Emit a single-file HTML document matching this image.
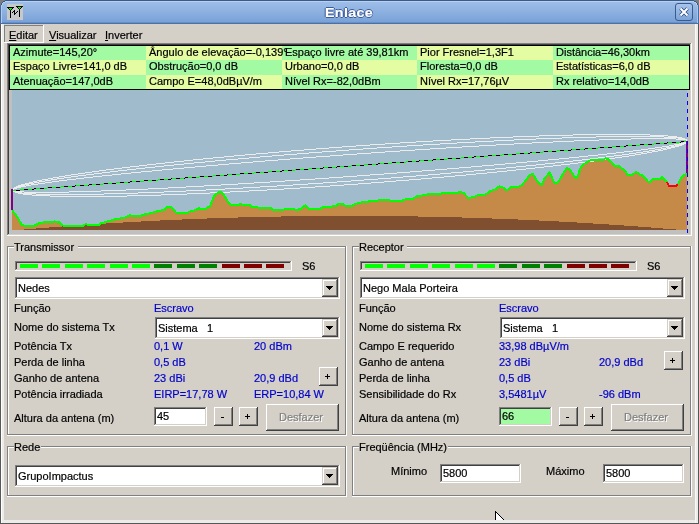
<!DOCTYPE html><html><head><meta charset="utf-8"><style>
html,body{margin:0;padding:0}body{width:699px;height:524px;position:relative;overflow:hidden;background:#7c7c7c}
body div,body svg{position:absolute}
.t{will-change:transform;-webkit-text-stroke:0.2px currentColor;font-family:"Liberation Sans", sans-serif;font-size:11px;line-height:13px;white-space:pre}
</style></head><body>
<div style="left:0px;top:24px;width:699px;height:500px;background:#5a5856;"></div>
<div style="left:1px;top:24px;width:697px;height:499px;background:#ececea;"></div>
<div style="left:1px;top:24px;width:1px;height:499px;background:#ffffff;"></div>
<div style="left:695px;top:24px;width:1px;height:499px;background:#f8f8f8;"></div>
<div style="left:4px;top:24px;width:691px;height:496px;background:#d4d0c8;"></div>
<div style="left:0;top:0;width:699px;height:24px;background:linear-gradient(#3c5a88 0,#3c5a88 1px,#b6d0f2 1px,#b6d0f2 2px,#9ebee8 2px,#8cb0e0 12px,#7aa2d8 22px,#6890c8 22px,#6890c8 23px,#4a70a8 23px,#4a70a8 24px)"></div>
<div style="left:0px;top:5px;width:1px;height:19px;background:#4a6a9a;"></div>
<div style="left:1px;top:5px;width:1px;height:18px;background:#b0ccf0;"></div>
<div style="left:697px;top:5px;width:1px;height:18px;background:#a8c4ea;"></div>
<div style="left:698px;top:5px;width:1px;height:19px;background:#4a6a9a;"></div>
<div style="left:0px;top:0px;width:5px;height:1px;background:#7c7c7c;"></div>
<div style="left:694px;top:0px;width:5px;height:1px;background:#7c7c7c;"></div>
<div style="left:0px;top:1px;width:3px;height:1px;background:#7c7c7c;"></div>
<div style="left:696px;top:1px;width:3px;height:1px;background:#7c7c7c;"></div>
<div style="left:3px;top:1px;width:2px;height:1px;background:#3c5a88;"></div>
<div style="left:694px;top:1px;width:2px;height:1px;background:#3c5a88;"></div>
<div style="left:0px;top:2px;width:2px;height:1px;background:#7c7c7c;"></div>
<div style="left:697px;top:2px;width:2px;height:1px;background:#7c7c7c;"></div>
<div style="left:2px;top:2px;width:1px;height:1px;background:#3c5a88;"></div>
<div style="left:696px;top:2px;width:1px;height:1px;background:#3c5a88;"></div>
<div style="left:3px;top:2px;width:2px;height:1px;background:#b6d0f2;"></div>
<div style="left:694px;top:2px;width:2px;height:1px;background:#b6d0f2;"></div>
<div style="left:0px;top:3px;width:1px;height:1px;background:#7c7c7c;"></div>
<div style="left:698px;top:3px;width:1px;height:1px;background:#7c7c7c;"></div>
<div style="left:1px;top:3px;width:1px;height:1px;background:#3c5a88;"></div>
<div style="left:697px;top:3px;width:1px;height:1px;background:#3c5a88;"></div>
<div style="left:2px;top:3px;width:1px;height:1px;background:#b6d0f2;"></div>
<div style="left:696px;top:3px;width:1px;height:1px;background:#b6d0f2;"></div>
<div style="left:0px;top:4px;width:1px;height:1px;background:#7c7c7c;"></div>
<div style="left:698px;top:4px;width:1px;height:1px;background:#7c7c7c;"></div>
<div style="left:1px;top:4px;width:1px;height:1px;background:#3c5a88;"></div>
<div style="left:697px;top:4px;width:1px;height:1px;background:#3c5a88;"></div>
<div style="left:2px;top:4px;width:1px;height:1px;background:#b6d0f2;"></div>
<div style="left:696px;top:4px;width:1px;height:1px;background:#b6d0f2;"></div>
<div class="t" style="left:325px;top:5px;font-size:12.5px;line-height:16px;font-weight:bold;letter-spacing:0.3px;transform:scaleX(1.14);transform-origin:0 0;color:#fff;text-shadow:1px 0 0 #3a5a98,-1px 0 0 #3a5a98,0 1px 0 #3a5a98,0 -1px 0 #3a5a98">Enlace</div>
<div style="left:675px;top:3px;width:18px;height:18px;box-sizing:border-box;border:1px solid #3a5a8a;border-radius:3px;background:linear-gradient(#a8c4ec,#7ca4d8)"></div>
<svg style="left:678px;top:6px" width="12" height="12"><path d="M2.5 2.5L9.5 9.5M9.5 2.5L2.5 9.5" stroke="#2c4c80" stroke-width="3.6"/><path d="M2.5 2.5L9.5 9.5M9.5 2.5L2.5 9.5" stroke="#fff" stroke-width="2"/></svg>
<svg style="left:7px;top:4px" width="16" height="16" shape-rendering="crispEdges"><rect width="16" height="16" fill="#c8c8c8"/><rect x="0" y="3" width="7" height="1" fill="#000"/><rect x="1" y="4" width="1" height="1" fill="#000"/><rect x="2" y="4" width="3" height="1" fill="#00ff00"/><rect x="5" y="4" width="1" height="1" fill="#000"/><rect x="2" y="5" width="1" height="1" fill="#000"/><rect x="3" y="5" width="1" height="1" fill="#00ff00"/><rect x="4" y="5" width="1" height="1" fill="#000"/><rect x="3" y="6" width="1" height="8" fill="#000"/><rect x="9" y="2" width="7" height="1" fill="#000"/><rect x="10" y="3" width="1" height="1" fill="#000"/><rect x="11" y="3" width="3" height="1" fill="#00ff00"/><rect x="14" y="3" width="1" height="1" fill="#000"/><rect x="11" y="4" width="1" height="1" fill="#000"/><rect x="12" y="4" width="1" height="1" fill="#00ff00"/><rect x="13" y="4" width="1" height="1" fill="#000"/><rect x="12" y="5" width="1" height="8" fill="#000"/><rect x="5" y="8" width="1" height="1" fill="#000"/><rect x="6" y="7" width="1" height="1" fill="#000"/><rect x="7" y="6" width="1" height="1" fill="#000"/><rect x="7" y="7" width="1" height="4" fill="#000"/><rect x="8" y="9" width="1" height="1" fill="#000"/><rect x="9" y="8" width="1" height="1" fill="#000"/><rect x="10" y="7" width="1" height="1" fill="#000"/></svg>
<div style="left:4px;top:25px;width:39px;height:1px;background:#808080;"></div>
<div style="left:4px;top:25px;width:1px;height:17px;background:#808080;"></div>
<div style="left:43px;top:25px;width:1px;height:18px;background:#ffffff;"></div>
<div style="left:4px;top:42px;width:40px;height:1px;background:#ffffff;"></div>
<div class="t" style="left:9px;top:29px;color:#000;"><u>E</u>ditar</div>
<div class="t" style="left:49px;top:29px;color:#000;"><u>V</u>isualizar</div>
<div class="t" style="left:105px;top:29px;color:#000;"><u>I</u>nverter</div>
<div style="left:9px;top:45px;width:681px;height:189px;background:#c0c0c0;"></div>
<div style="left:7px;top:43px;width:684px;height:1px;background:#808080;"></div>
<div style="left:7px;top:43px;width:1px;height:192px;background:#808080;"></div>
<div style="left:691px;top:43px;width:1px;height:193px;background:#ffffff;"></div>
<div style="left:7px;top:235px;width:685px;height:1px;background:#ffffff;"></div>
<div style="left:8px;top:44px;width:682px;height:1px;background:#404040;"></div>
<div style="left:8px;top:44px;width:1px;height:190px;background:#404040;"></div>
<div style="left:690px;top:44px;width:1px;height:191px;background:#d4d0c8;"></div>
<div style="left:8px;top:234px;width:683px;height:1px;background:#d4d0c8;"></div>
<div style="left:9px;top:45px;width:681px;height:45px;background:#000;"></div>
<div style="left:10px;top:46px;width:136px;height:14px;background:#a2faa2;"></div>
<div style="left:146px;top:46px;width:136px;height:14px;background:#e4fca2;"></div>
<div style="left:282px;top:46px;width:135px;height:14px;background:#a2faa2;"></div>
<div style="left:417px;top:46px;width:136px;height:14px;background:#e4fca2;"></div>
<div style="left:553px;top:46px;width:136px;height:14px;background:#a2faa2;"></div>
<div style="left:10px;top:60px;width:136px;height:15px;background:#e4fca2;"></div>
<div style="left:146px;top:60px;width:136px;height:15px;background:#a2faa2;"></div>
<div style="left:282px;top:60px;width:135px;height:15px;background:#e4fca2;"></div>
<div style="left:417px;top:60px;width:136px;height:15px;background:#a2faa2;"></div>
<div style="left:553px;top:60px;width:136px;height:15px;background:#e4fca2;"></div>
<div style="left:10px;top:75px;width:136px;height:14px;background:#a2faa2;"></div>
<div style="left:146px;top:75px;width:136px;height:14px;background:#e4fca2;"></div>
<div style="left:282px;top:75px;width:135px;height:14px;background:#a2faa2;"></div>
<div style="left:417px;top:75px;width:136px;height:14px;background:#e4fca2;"></div>
<div style="left:553px;top:75px;width:136px;height:14px;background:#a2faa2;"></div>
<div class="t" style="left:13px;top:46px;color:#000;">Azimute=145,20°</div>
<div class="t" style="left:149px;top:46px;color:#000;">Ângulo de elevação=-0,139°</div>
<div class="t" style="left:285px;top:46px;color:#000;">Espaço livre até 39,81km</div>
<div class="t" style="left:420px;top:46px;color:#000;">Pior Fresnel=1,3F1</div>
<div class="t" style="left:556px;top:46px;color:#000;">Distância=46,30km</div>
<div class="t" style="left:13px;top:60px;color:#000;">Espaço Livre=141,0 dB</div>
<div class="t" style="left:149px;top:60px;color:#000;">Obstrução=0,0 dB</div>
<div class="t" style="left:285px;top:60px;color:#000;">Urbano=0,0 dB</div>
<div class="t" style="left:420px;top:60px;color:#000;">Floresta=0,0 dB</div>
<div class="t" style="left:556px;top:60px;color:#000;">Estatísticas=6,0 dB</div>
<div class="t" style="left:13px;top:75px;color:#000;">Atenuação=147,0dB</div>
<div class="t" style="left:149px;top:75px;color:#000;">Campo E=48,0dBµV/m</div>
<div class="t" style="left:285px;top:75px;color:#000;">Nível Rx=-82,0dBm</div>
<div class="t" style="left:420px;top:75px;color:#000;">Nível Rx=17,76µV</div>
<div class="t" style="left:556px;top:75px;color:#000;">Rx relativo=14,0dB</div>
<svg style="left:12px;top:90px" width="675" height="140" shape-rendering="crispEdges">
<rect width="675" height="140" fill="#a0bccc"/>
<polygon points="0,140 0,120 0.5,120.5 4.2,125.5 7.1,130.1 9.9,135.0 14.5,136.2 19.7,136.2 22.5,135.5 27.1,133.3 31.7,132.4 40.8,132.4 42.5,131.2 44.3,132.4 47.7,132.4 50.5,135.5 71.7,135.5 73.5,134.1 76.9,135.2 86.1,135.5 88.4,133.5 96.4,131.2 103.3,129.3 112.4,127.8 118.1,125.2 120.4,126.1 127.3,126.3 133.0,124.4 139.9,122.9 146.7,120.9 151.9,120.0 155.9,116.6 159.4,117.4 164.5,123.1 174.2,123.5 178.3,121.4 184.0,120.0 186.8,118.2 189.1,119.1 193.1,118.9 197.1,116.8 198.8,114.5 202.3,105.4 208.0,101.4 212.0,105.4 216.0,111.7 219.4,115.1 226.3,115.1 228.5,114.0 230.8,114.8 237.7,115.1 239.9,117.1 245.7,117.4 247.4,118.2 258.8,118.2 261.7,120.2 271.4,120.2 272.5,119.0 282.8,119.4 284.6,120.5 286.9,119.4 289.1,118.8 293.1,115.4 297.1,119.4 307.5,119.0 311.4,117.2 318.8,116.7 324.5,115.5 325.7,114.4 331.4,114.4 332.5,115.5 340.5,115.5 342.3,114.4 346.3,113.2 349.1,112.4 355.4,112.4 357.7,110.9 374.9,110.1 380.6,110.9 388.5,111.3 393.1,109.4 401.1,109.0 404.5,106.5 413.7,104.8 417.7,103.7 428.5,104.2 431.4,102.5 434.3,102.5 436.5,103.3 445.1,103.3 448.0,101.7 452.0,103.3 456.6,108.2 459.4,107.4 462.9,106.5 465.2,105.4 468.5,105.1 474.2,104.3 478.2,100.8 482.2,100.0 487.4,96.2 491.4,97.7 494.8,100.5 499.4,97.0 505.1,97.4 509.7,95.1 514.8,89.4 517.1,85.4 520.6,83.7 525.7,91.7 529.7,95.1 532.6,88.2 537.7,82.5 542.3,92.8 545.2,93.1 546.9,91.0 550.4,84.7 554.9,77.8 558.4,80.1 563.5,88.1 565.8,86.4 568.1,78.4 571.0,75.0 576.7,70.9 580.1,69.8 591.6,69.8 593.3,68.3 596.1,69.2 600.7,73.2 602.4,75.5 605.9,75.5 612.1,80.1 616.2,85.0 619.6,85.5 624.1,81.7 627.1,84.2 630.5,85.3 637.0,92.6 640.8,89.4 647.7,89.4 649.8,87.2 652.8,89.8 655.0,91.8 657.1,96.1 664.4,96.1 666.6,92.8 668.7,88.4 671.3,85.8 675.0,83.2 675,82.69999999999999 675,140" fill="#c68a48"/>
<path d="M0,140L0,140L1,140L1,140L2,140L2,140L3,140L3,140L4,140L4,140L5,140L5,140L6,140L6,140L7,140L7,140L8,140L8,140L9,140L9,140L10,140L10,140L11,140L11,140L12,140L12,139L13,139L13,139L14,139L14,139L15,139L15,139L16,139L16,139L17,139L17,139L18,139L18,139L19,139L19,139L20,139L20,139L21,139L21,139L22,139L22,139L23,139L23,139L24,139L24,138L25,138L25,138L26,138L26,138L27,138L27,138L28,138L28,138L29,138L29,138L30,138L30,138L31,138L31,138L32,138L32,138L33,138L33,138L34,138L34,138L35,138L35,138L36,138L36,138L37,138L37,137L38,137L38,137L39,137L39,137L40,137L40,137L41,137L41,137L42,137L42,137L43,137L43,137L44,137L44,137L45,137L45,137L46,137L46,137L47,137L47,137L48,137L48,137L49,137L49,137L50,137L50,136L51,136L51,136L52,136L52,136L53,136L53,136L54,136L54,136L55,136L55,136L56,136L56,136L57,136L57,136L58,136L58,136L59,136L59,136L60,136L60,136L61,136L61,136L62,136L62,136L63,136L63,136L64,136L64,135L65,135L65,135L66,135L66,135L67,135L67,135L68,135L68,135L69,135L69,135L70,135L70,135L71,135L71,135L72,135L72,135L73,135L73,135L74,135L74,135L75,135L75,135L76,135L76,135L77,135L77,135L78,135L78,135L79,135L79,134L80,134L80,134L81,134L81,134L82,134L82,134L83,134L83,134L84,134L84,134L85,134L85,134L86,134L86,134L87,134L87,134L88,134L88,134L89,134L89,134L90,134L90,134L91,134L91,134L92,134L92,134L93,134L93,134L94,134L94,133L95,133L95,133L96,133L96,133L97,133L97,133L98,133L98,133L99,133L99,133L100,133L100,133L101,133L101,133L102,133L102,133L103,133L103,133L104,133L104,133L105,133L105,133L106,133L106,133L107,133L107,133L108,133L108,133L109,133L109,133L110,133L110,133L111,133L111,132L112,132L112,132L113,132L113,132L114,132L114,132L115,132L115,132L116,132L116,132L117,132L117,132L118,132L118,132L119,132L119,132L120,132L120,132L121,132L121,132L122,132L122,132L123,132L123,132L124,132L124,132L125,132L125,132L126,132L126,132L127,132L127,132L128,132L128,132L129,132L129,131L130,131L130,131L131,131L131,131L132,131L132,131L133,131L133,131L134,131L134,131L135,131L135,131L136,131L136,131L137,131L137,131L138,131L138,131L139,131L139,131L140,131L140,131L141,131L141,131L142,131L142,131L143,131L143,131L144,131L144,131L145,131L145,131L146,131L146,131L147,131L147,131L148,131L148,130L149,130L149,130L150,130L150,130L151,130L151,130L152,130L152,130L153,130L153,130L154,130L154,130L155,130L155,130L156,130L156,130L157,130L157,130L158,130L158,130L159,130L159,130L160,130L160,130L161,130L161,130L162,130L162,130L163,130L163,130L164,130L164,130L165,130L165,130L166,130L166,130L167,130L167,130L168,130L168,130L169,130L169,130L170,130L170,129L171,129L171,129L172,129L172,129L173,129L173,129L174,129L174,129L175,129L175,129L176,129L176,129L177,129L177,129L178,129L178,129L179,129L179,129L180,129L180,129L181,129L181,129L182,129L182,129L183,129L183,129L184,129L184,129L185,129L185,129L186,129L186,129L187,129L187,129L188,129L188,129L189,129L189,129L190,129L190,129L191,129L191,129L192,129L192,129L193,129L193,129L194,129L194,129L195,129L195,128L196,128L196,128L197,128L197,128L198,128L198,128L199,128L199,128L200,128L200,128L201,128L201,128L202,128L202,128L203,128L203,128L204,128L204,128L205,128L205,128L206,128L206,128L207,128L207,128L208,128L208,128L209,128L209,128L210,128L210,128L211,128L211,128L212,128L212,128L213,128L213,128L214,128L214,128L215,128L215,128L216,128L216,128L217,128L217,128L218,128L218,128L219,128L219,128L220,128L220,128L221,128L221,128L222,128L222,128L223,128L223,128L224,128L224,128L225,128L225,128L226,128L226,127L227,127L227,127L228,127L228,127L229,127L229,127L230,127L230,127L231,127L231,127L232,127L232,127L233,127L233,127L234,127L234,127L235,127L235,127L236,127L236,127L237,127L237,127L238,127L238,127L239,127L239,127L240,127L240,127L241,127L241,127L242,127L242,127L243,127L243,127L244,127L244,127L245,127L245,127L246,127L246,127L247,127L247,127L248,127L248,127L249,127L249,127L250,127L250,127L251,127L251,127L252,127L252,127L253,127L253,127L254,127L254,127L255,127L255,127L256,127L256,127L257,127L257,127L258,127L258,127L259,127L259,127L260,127L260,127L261,127L261,127L262,127L262,127L263,127L263,127L264,127L264,127L265,127L265,127L266,127L266,127L267,127L267,127L268,127L268,127L269,127L269,126L270,126L270,126L271,126L271,126L272,126L272,126L273,126L273,126L274,126L274,126L275,126L275,126L276,126L276,126L277,126L277,126L278,126L278,126L279,126L279,126L280,126L280,126L281,126L281,126L282,126L282,126L283,126L283,126L284,126L284,126L285,126L285,126L286,126L286,126L287,126L287,126L288,126L288,126L289,126L289,126L290,126L290,126L291,126L291,126L292,126L292,126L293,126L293,126L294,126L294,126L295,126L295,126L296,126L296,126L297,126L297,126L298,126L298,126L299,126L299,126L300,126L300,126L301,126L301,126L302,126L302,126L303,126L303,126L304,126L304,126L305,126L305,126L306,126L306,126L307,126L307,126L308,126L308,126L309,126L309,126L310,126L310,126L311,126L311,126L312,126L312,126L313,126L313,126L314,126L314,126L315,126L315,126L316,126L316,126L317,126L317,126L318,126L318,126L319,126L319,126L320,126L320,126L321,126L321,126L322,126L322,126L323,126L323,126L324,126L324,126L325,126L325,126L326,126L326,126L327,126L327,126L328,126L328,126L329,126L329,126L330,126L330,126L331,126L331,126L332,126L332,126L333,126L333,126L334,126L334,126L335,126L335,126L336,126L336,126L337,126L337,126L338,126L338,126L339,126L339,126L340,126L340,126L341,126L341,126L342,126L342,126L343,126L343,126L344,126L344,126L345,126L345,126L346,126L346,126L347,126L347,126L348,126L348,126L349,126L349,126L350,126L350,126L351,126L351,126L352,126L352,126L353,126L353,126L354,126L354,126L355,126L355,126L356,126L356,126L357,126L357,126L358,126L358,126L359,126L359,126L360,126L360,126L361,126L361,126L362,126L362,126L363,126L363,126L364,126L364,126L365,126L365,126L366,126L366,126L367,126L367,126L368,126L368,126L369,126L369,126L370,126L370,126L371,126L371,126L372,126L372,126L373,126L373,126L374,126L374,126L375,126L375,126L376,126L376,126L377,126L377,126L378,126L378,126L379,126L379,126L380,126L380,126L381,126L381,126L382,126L382,126L383,126L383,126L384,126L384,126L385,126L385,126L386,126L386,126L387,126L387,126L388,126L388,126L389,126L389,126L390,126L390,126L391,126L391,126L392,126L392,126L393,126L393,126L394,126L394,126L395,126L395,126L396,126L396,126L397,126L397,126L398,126L398,126L399,126L399,126L400,126L400,126L401,126L401,126L402,126L402,126L403,126L403,126L404,126L404,126L405,126L405,126L406,126L406,127L407,127L407,127L408,127L408,127L409,127L409,127L410,127L410,127L411,127L411,127L412,127L412,127L413,127L413,127L414,127L414,127L415,127L415,127L416,127L416,127L417,127L417,127L418,127L418,127L419,127L419,127L420,127L420,127L421,127L421,127L422,127L422,127L423,127L423,127L424,127L424,127L425,127L425,127L426,127L426,127L427,127L427,127L428,127L428,127L429,127L429,127L430,127L430,127L431,127L431,127L432,127L432,127L433,127L433,127L434,127L434,127L435,127L435,127L436,127L436,127L437,127L437,127L438,127L438,127L439,127L439,127L440,127L440,127L441,127L441,127L442,127L442,127L443,127L443,127L444,127L444,127L445,127L445,127L446,127L446,127L447,127L447,127L448,127L448,127L449,127L449,127L450,127L450,128L451,128L451,128L452,128L452,128L453,128L453,128L454,128L454,128L455,128L455,128L456,128L456,128L457,128L457,128L458,128L458,128L459,128L459,128L460,128L460,128L461,128L461,128L462,128L462,128L463,128L463,128L464,128L464,128L465,128L465,128L466,128L466,128L467,128L467,128L468,128L468,128L469,128L469,128L470,128L470,128L471,128L471,128L472,128L472,128L473,128L473,128L474,128L474,128L475,128L475,128L476,128L476,128L477,128L477,128L478,128L478,128L479,128L479,128L480,128L480,129L481,129L481,129L482,129L482,129L483,129L483,129L484,129L484,129L485,129L485,129L486,129L486,129L487,129L487,129L488,129L488,129L489,129L489,129L490,129L490,129L491,129L491,129L492,129L492,129L493,129L493,129L494,129L494,129L495,129L495,129L496,129L496,129L497,129L497,129L498,129L498,129L499,129L499,129L500,129L500,129L501,129L501,129L502,129L502,129L503,129L503,129L504,129L504,129L505,129L505,129L506,129L506,130L507,130L507,130L508,130L508,130L509,130L509,130L510,130L510,130L511,130L511,130L512,130L512,130L513,130L513,130L514,130L514,130L515,130L515,130L516,130L516,130L517,130L517,130L518,130L518,130L519,130L519,130L520,130L520,130L521,130L521,130L522,130L522,130L523,130L523,130L524,130L524,130L525,130L525,130L526,130L526,130L527,130L527,131L528,131L528,131L529,131L529,131L530,131L530,131L531,131L531,131L532,131L532,131L533,131L533,131L534,131L534,131L535,131L535,131L536,131L536,131L537,131L537,131L538,131L538,131L539,131L539,131L540,131L540,131L541,131L541,131L542,131L542,131L543,131L543,131L544,131L544,131L545,131L545,131L546,131L546,131L547,131L547,132L548,132L548,132L549,132L549,132L550,132L550,132L551,132L551,132L552,132L552,132L553,132L553,132L554,132L554,132L555,132L555,132L556,132L556,132L557,132L557,132L558,132L558,132L559,132L559,132L560,132L560,132L561,132L561,132L562,132L562,132L563,132L563,132L564,132L564,132L565,132L565,133L566,133L566,133L567,133L567,133L568,133L568,133L569,133L569,133L570,133L570,133L571,133L571,133L572,133L572,133L573,133L573,133L574,133L574,133L575,133L575,133L576,133L576,133L577,133L577,133L578,133L578,133L579,133L579,133L580,133L580,133L581,133L581,134L582,134L582,134L583,134L583,134L584,134L584,134L585,134L585,134L586,134L586,134L587,134L587,134L588,134L588,134L589,134L589,134L590,134L590,134L591,134L591,134L592,134L592,134L593,134L593,134L594,134L594,134L595,134L595,134L596,134L596,134L597,134L597,135L598,135L598,135L599,135L599,135L600,135L600,135L601,135L601,135L602,135L602,135L603,135L603,135L604,135L604,135L605,135L605,135L606,135L606,135L607,135L607,135L608,135L608,135L609,135L609,135L610,135L610,135L611,135L611,135L612,135L612,136L613,136L613,136L614,136L614,136L615,136L615,136L616,136L616,136L617,136L617,136L618,136L618,136L619,136L619,136L620,136L620,136L621,136L621,136L622,136L622,136L623,136L623,136L624,136L624,136L625,136L625,136L626,136L626,137L627,137L627,137L628,137L628,137L629,137L629,137L630,137L630,137L631,137L631,137L632,137L632,137L633,137L633,137L634,137L634,137L635,137L635,137L636,137L636,137L637,137L637,137L638,137L638,137L639,137L639,138L640,138L640,138L641,138L641,138L642,138L642,138L643,138L643,138L644,138L644,138L645,138L645,138L646,138L646,138L647,138L647,138L648,138L648,138L649,138L649,138L650,138L650,138L651,138L651,139L652,139L652,139L653,139L653,139L654,139L654,139L655,139L655,139L656,139L656,139L657,139L657,139L658,139L658,139L659,139L659,139L660,139L660,139L661,139L661,139L662,139L662,139L663,139L663,139L664,139L664,140L665,140L665,140L666,140L666,140L667,140L667,140L668,140L668,140L669,140L669,140L670,140L670,140L671,140L671,140L672,140L672,140L673,140L673,140L674,140L674,140L675,140L675,140z" fill="#7f4f30"/>
<path d="M0,100h1v1h-1zM1,99h1v1h-1zM2,98h3v1h-3zM5,97h4v1h-4zM9,96h5v1h-5zM14,95h5v1h-5zM19,94h7v1h-7zM26,93h7v1h-7zM33,92h7v1h-7zM40,91h7v1h-7zM47,90h8v1h-8zM55,89h9v1h-9zM64,88h8v1h-8zM72,87h9v1h-9zM81,86h9v1h-9zM90,85h10v1h-10zM100,84h9v1h-9zM109,83h10v1h-10zM119,82h10v1h-10zM129,81h11v1h-11zM140,80h10v1h-10zM150,79h11v1h-11zM161,78h11v1h-11zM172,77h11v1h-11zM183,76h11v1h-11zM194,75h12v1h-12zM206,74h11v1h-11zM217,73h12v1h-12zM229,72h12v1h-12zM241,71h12v1h-12zM253,70h13v1h-13zM266,69h12v1h-12zM278,68h13v1h-13zM291,67h13v1h-13zM304,66h14v1h-14zM318,65h13v1h-13zM331,64h14v1h-14zM345,63h14v1h-14zM359,62h14v1h-14zM373,61h15v1h-15zM388,60h15v1h-15zM403,59h15v1h-15zM418,58h16v1h-16zM434,57h16v1h-16zM450,56h17v1h-17zM467,55h17v1h-17zM484,54h18v1h-18zM502,53h18v1h-18zM520,52h21v1h-21zM541,51h21v1h-21zM562,50h25v1h-25zM587,49h32v1h-32zM619,48h45v1h-45zM664,49h10v1h-10zM674,50h1v1h-1zM0,100h2v1h-2zM2,101h10v1h-10zM12,102h45v1h-45zM57,101h32v1h-32zM89,100h25v1h-25zM114,99h22v1h-22zM136,98h20v1h-20zM156,97h18v1h-18zM174,96h18v1h-18zM192,95h17v1h-17zM209,94h17v1h-17zM226,93h16v1h-16zM242,92h16v1h-16zM258,91h15v1h-15zM273,90h15v1h-15zM288,89h15v1h-15zM303,88h14v1h-14zM317,87h14v1h-14zM331,86h14v1h-14zM345,85h13v1h-13zM358,84h14v1h-14zM372,83h13v1h-13zM385,82h13v1h-13zM398,81h12v1h-12zM410,80h13v1h-13zM423,79h12v1h-12zM435,78h12v1h-12zM447,77h12v1h-12zM459,76h11v1h-11zM470,75h12v1h-12zM482,74h11v1h-11zM493,73h11v1h-11zM504,72h11v1h-11zM515,71h11v1h-11zM526,70h10v1h-10zM536,69h11v1h-11zM547,68h10v1h-10zM557,67h10v1h-10zM567,66h9v1h-9zM576,65h10v1h-10zM586,64h9v1h-9zM595,63h9v1h-9zM604,62h8v1h-8zM612,61h9v1h-9zM621,60h8v1h-8zM629,59h7v1h-7zM636,58h7v1h-7zM643,57h7v1h-7zM650,56h7v1h-7zM657,55h5v1h-5zM662,54h5v1h-5zM667,53h4v1h-4zM671,52h3v1h-3zM674,51h1v1h-1zM0,100h1v1h-1zM1,98h1v2h-1zM2,98h1v1h-1zM3,97h2v1h-2zM5,96h4v1h-4zM9,95h4v1h-4zM13,94h4v1h-4zM17,93h5v1h-5zM22,92h5v1h-5zM27,91h6v1h-6zM33,90h6v1h-6zM39,89h6v1h-6zM45,88h7v1h-7zM52,87h7v1h-7zM59,86h7v1h-7zM66,85h8v1h-8zM74,84h8v1h-8zM82,83h8v1h-8zM90,82h8v1h-8zM98,81h8v1h-8zM106,80h9v1h-9zM115,79h9v1h-9zM124,78h9v1h-9zM133,77h10v1h-10zM143,76h9v1h-9zM152,75h10v1h-10zM162,74h10v1h-10zM172,73h10v1h-10zM182,72h11v1h-11zM193,71h10v1h-10zM203,70h11v1h-11zM214,69h12v1h-12zM226,68h11v1h-11zM237,67h11v1h-11zM248,66h12v1h-12zM260,65h12v1h-12zM272,64h13v1h-13zM285,63h12v1h-12zM297,62h13v1h-13zM310,61h14v1h-14zM324,60h13v1h-13zM337,59h14v1h-14zM351,58h14v1h-14zM365,57h15v1h-15zM380,56h15v1h-15zM395,55h16v1h-16zM411,54h17v1h-17zM428,53h17v1h-17zM445,52h18v1h-18zM463,51h19v1h-19zM482,50h20v1h-20zM502,49h22v1h-22zM524,48h26v1h-26zM550,47h34v1h-34zM584,46h68v1h-68zM652,47h14v1h-14zM666,48h6v1h-6zM672,49h3v1h-3zM0,100h1v1h-1zM1,101h3v1h-3zM4,102h6v1h-6zM10,103h14v1h-14zM24,104h68v1h-68zM92,103h34v1h-34zM126,102h26v1h-26zM152,101h22v1h-22zM174,100h20v1h-20zM194,99h19v1h-19zM213,98h18v1h-18zM231,97h17v1h-17zM248,96h17v1h-17zM265,95h16v1h-16zM281,94h15v1h-15zM296,93h15v1h-15zM311,92h14v1h-14zM325,91h14v1h-14zM339,90h13v1h-13zM352,89h14v1h-14zM366,88h13v1h-13zM379,87h12v1h-12zM391,86h13v1h-13zM404,85h12v1h-12zM416,84h12v1h-12zM428,83h11v1h-11zM439,82h12v1h-12zM451,81h11v1h-11zM462,80h11v1h-11zM473,79h10v1h-10zM483,78h11v1h-11zM494,77h10v1h-10zM504,76h10v1h-10zM514,75h10v1h-10zM524,74h9v1h-9zM533,73h10v1h-10zM543,72h9v1h-9zM552,71h9v1h-9zM561,70h9v1h-9zM570,69h8v1h-8zM578,68h8v1h-8zM586,67h8v1h-8zM594,66h8v1h-8zM602,65h8v1h-8zM610,64h7v1h-7zM617,63h7v1h-7zM624,62h7v1h-7zM631,61h6v1h-6zM637,60h6v1h-6zM643,59h6v1h-6zM649,58h5v1h-5zM654,57h5v1h-5zM659,56h4v1h-4zM663,55h4v1h-4zM667,54h4v1h-4zM671,53h2v1h-2zM673,52h2v1h-2zM0,100h1v1h-1zM1,98h1v2h-1zM2,97h2v1h-2zM4,96h2v1h-2zM6,95h3v1h-3zM9,94h4v1h-4zM13,93h4v1h-4zM17,92h4v1h-4zM21,91h4v1h-4zM25,90h5v1h-5zM30,89h6v1h-6zM36,88h5v1h-5zM41,87h6v1h-6zM47,86h6v1h-6zM53,85h6v1h-6zM59,84h7v1h-7zM66,83h7v1h-7zM73,82h7v1h-7zM80,81h7v1h-7zM87,80h7v1h-7zM94,79h8v1h-8zM102,78h8v1h-8zM110,77h8v1h-8zM118,76h9v1h-9zM127,75h8v1h-8zM135,74h9v1h-9zM144,73h9v1h-9zM153,72h9v1h-9zM162,71h10v1h-10zM172,70h9v1h-9zM181,69h10v1h-10zM191,68h10v1h-10zM201,67h11v1h-11zM212,66h10v1h-10zM222,65h11v1h-11zM233,64h11v1h-11zM244,63h12v1h-12zM256,62h11v1h-11zM267,61h12v1h-12zM279,60h13v1h-13zM292,59h12v1h-12zM304,58h13v1h-13zM317,57h13v1h-13zM330,56h14v1h-14zM344,55h14v1h-14zM358,54h15v1h-15zM373,53h15v1h-15zM388,52h16v1h-16zM404,51h17v1h-17zM421,50h18v1h-18zM439,49h19v1h-19zM458,48h20v1h-20zM478,47h23v1h-23zM501,46h26v1h-26zM527,45h34v1h-34zM561,44h77v1h-77zM638,45h18v1h-18zM656,46h9v1h-9zM665,47h5v1h-5zM670,48h3v1h-3zM673,49h2v1h-2zM0,100h1v1h-1zM1,101h2v1h-2zM3,102h3v1h-3zM6,103h5v1h-5zM11,104h9v1h-9zM20,105h18v1h-18zM38,106h77v1h-77zM115,105h34v1h-34zM149,104h26v1h-26zM175,103h23v1h-23zM198,102h20v1h-20zM218,101h19v1h-19zM237,100h18v1h-18zM255,99h17v1h-17zM272,98h16v1h-16zM288,97h15v1h-15zM303,96h15v1h-15zM318,95h14v1h-14zM332,94h14v1h-14zM346,93h13v1h-13zM359,92h13v1h-13zM372,91h12v1h-12zM384,90h13v1h-13zM397,89h12v1h-12zM409,88h11v1h-11zM420,87h12v1h-12zM432,86h11v1h-11zM443,85h11v1h-11zM454,84h10v1h-10zM464,83h11v1h-11zM475,82h10v1h-10zM485,81h10v1h-10zM495,80h9v1h-9zM504,79h10v1h-10zM514,78h9v1h-9zM523,77h9v1h-9zM532,76h9v1h-9zM541,75h8v1h-8zM549,74h9v1h-9zM558,73h8v1h-8zM566,72h8v1h-8zM574,71h8v1h-8zM582,70h7v1h-7zM589,69h7v1h-7zM596,68h7v1h-7zM603,67h7v1h-7zM610,66h7v1h-7zM617,65h6v1h-6zM623,64h6v1h-6zM629,63h6v1h-6zM635,62h5v1h-5zM640,61h6v1h-6zM646,60h5v1h-5zM651,59h4v1h-4zM655,58h4v1h-4zM659,57h4v1h-4zM663,56h4v1h-4zM667,55h3v1h-3zM670,54h2v1h-2zM672,53h2v1h-2zM674,52h1v1h-1z" fill="#ececec"/>
<polyline points="0.5,120.5 4.2,125.5 7.1,130.1 9.9,135.0 14.5,136.2 19.7,136.2 22.5,135.5 27.1,133.3 31.7,132.4 40.8,132.4 42.5,131.2 44.3,132.4 47.7,132.4 50.5,135.5 71.7,135.5 73.5,134.1 76.9,135.2 86.1,135.5 88.4,133.5 96.4,131.2 103.3,129.3 112.4,127.8 118.1,125.2 120.4,126.1 127.3,126.3 133.0,124.4 139.9,122.9 146.7,120.9 151.9,120.0 155.9,116.6 159.4,117.4 164.5,123.1 174.2,123.5 178.3,121.4 184.0,120.0 186.8,118.2 189.1,119.1 193.1,118.9 197.1,116.8 198.8,114.5 202.3,105.4 208.0,101.4 212.0,105.4 216.0,111.7 219.4,115.1 226.3,115.1 228.5,114.0 230.8,114.8 237.7,115.1 239.9,117.1 245.7,117.4 247.4,118.2 258.8,118.2 261.7,120.2 271.4,120.2 272.5,119.0 282.8,119.4 284.6,120.5 286.9,119.4 289.1,118.8 293.1,115.4 297.1,119.4 307.5,119.0 311.4,117.2 318.8,116.7 324.5,115.5 325.7,114.4 331.4,114.4 332.5,115.5 340.5,115.5 342.3,114.4 346.3,113.2 349.1,112.4 355.4,112.4 357.7,110.9 374.9,110.1 380.6,110.9 388.5,111.3 393.1,109.4 401.1,109.0 404.5,106.5 413.7,104.8 417.7,103.7 428.5,104.2 431.4,102.5 434.3,102.5 436.5,103.3 445.1,103.3 448.0,101.7 452.0,103.3 456.6,108.2 459.4,107.4 462.9,106.5 465.2,105.4 468.5,105.1 474.2,104.3 478.2,100.8 482.2,100.0 487.4,96.2 491.4,97.7 494.8,100.5 499.4,97.0 505.1,97.4 509.7,95.1 514.8,89.4 517.1,85.4 520.6,83.7 525.7,91.7 529.7,95.1 532.6,88.2 537.7,82.5 542.3,92.8 545.2,93.1 546.9,91.0 550.4,84.7 554.9,77.8 558.4,80.1 563.5,88.1 565.8,86.4 568.1,78.4 571.0,75.0 576.7,70.9 580.1,69.8 591.6,69.8 593.3,68.3 596.1,69.2 600.7,73.2 602.4,75.5 605.9,75.5 612.1,80.1 616.2,85.0 619.6,85.5 624.1,81.7 627.1,84.2 630.5,85.3 637.0,92.6 640.8,89.4 647.7,89.4 649.8,87.2 652.8,89.8 655.0,91.8 657.1,96.1 664.4,96.1 666.6,92.8 668.7,88.4 671.3,85.8 675.0,83.2" fill="none" stroke="#00ff00" stroke-width="2" stroke-linejoin="round"/>
<polyline points="655.0,91.8 657.1,96.1 664.4,96.1 665.5,94.0" fill="none" stroke="#ff0000" stroke-width="2"/>
<path d="M0,100h1v1h-1zM1,100h1v1h-1zM2,100h1v1h-1zM3,100h1v1h-1zM8,99h1v1h-1zM9,99h1v1h-1zM10,99h1v1h-1zM11,99h1v1h-1zM16,99h1v1h-1zM17,99h1v1h-1zM18,99h1v1h-1zM19,99h1v1h-1zM24,98h1v1h-1zM25,98h1v1h-1zM26,98h1v1h-1zM27,98h1v1h-1zM32,98h1v1h-1zM33,98h1v1h-1zM34,98h1v1h-1zM35,97h1v1h-1zM40,97h1v1h-1zM41,97h1v1h-1zM42,97h1v1h-1zM43,97h1v1h-1zM48,97h1v1h-1zM49,96h1v1h-1zM50,96h1v1h-1zM51,96h1v1h-1zM56,96h1v1h-1zM57,96h1v1h-1zM58,96h1v1h-1zM59,96h1v1h-1zM64,95h1v1h-1zM65,95h1v1h-1zM66,95h1v1h-1zM67,95h1v1h-1zM72,95h1v1h-1zM73,95h1v1h-1zM74,95h1v1h-1zM75,95h1v1h-1zM80,94h1v1h-1zM81,94h1v1h-1zM82,94h1v1h-1zM83,94h1v1h-1zM88,94h1v1h-1zM89,94h1v1h-1zM90,94h1v1h-1zM91,93h1v1h-1zM96,93h1v1h-1zM97,93h1v1h-1zM98,93h1v1h-1zM99,93h1v1h-1zM104,92h1v1h-1zM105,92h1v1h-1zM106,92h1v1h-1zM107,92h1v1h-1zM112,92h1v1h-1zM113,92h1v1h-1zM114,92h1v1h-1zM115,92h1v1h-1zM120,91h1v1h-1zM121,91h1v1h-1zM122,91h1v1h-1zM123,91h1v1h-1zM128,91h1v1h-1zM129,91h1v1h-1zM130,91h1v1h-1zM131,91h1v1h-1zM136,90h1v1h-1zM137,90h1v1h-1zM138,90h1v1h-1zM139,90h1v1h-1zM144,90h1v1h-1zM145,90h1v1h-1zM146,89h1v1h-1zM147,89h1v1h-1zM152,89h1v1h-1zM153,89h1v1h-1zM154,89h1v1h-1zM155,89h1v1h-1zM160,88h1v1h-1zM161,88h1v1h-1zM162,88h1v1h-1zM163,88h1v1h-1zM168,88h1v1h-1zM169,88h1v1h-1zM170,88h1v1h-1zM171,88h1v1h-1zM176,87h1v1h-1zM177,87h1v1h-1zM178,87h1v1h-1zM179,87h1v1h-1zM184,87h1v1h-1zM185,87h1v1h-1zM186,87h1v1h-1zM187,86h1v1h-1zM192,86h1v1h-1zM193,86h1v1h-1zM194,86h1v1h-1zM195,86h1v1h-1zM200,86h1v1h-1zM201,85h1v1h-1zM202,85h1v1h-1zM203,85h1v1h-1zM208,85h1v1h-1zM209,85h1v1h-1zM210,85h1v1h-1zM211,85h1v1h-1zM216,84h1v1h-1zM217,84h1v1h-1zM218,84h1v1h-1zM219,84h1v1h-1zM224,84h1v1h-1zM225,84h1v1h-1zM226,84h1v1h-1zM227,84h1v1h-1zM232,83h1v1h-1zM233,83h1v1h-1zM234,83h1v1h-1zM235,83h1v1h-1zM240,83h1v1h-1zM241,83h1v1h-1zM242,82h1v1h-1zM243,82h1v1h-1zM248,82h1v1h-1zM249,82h1v1h-1zM250,82h1v1h-1zM251,82h1v1h-1zM256,81h1v1h-1zM257,81h1v1h-1zM258,81h1v1h-1zM259,81h1v1h-1zM264,81h1v1h-1zM265,81h1v1h-1zM266,81h1v1h-1zM267,81h1v1h-1zM272,80h1v1h-1zM273,80h1v1h-1zM274,80h1v1h-1zM275,80h1v1h-1zM280,80h1v1h-1zM281,80h1v1h-1zM282,80h1v1h-1zM283,79h1v1h-1zM288,79h1v1h-1zM289,79h1v1h-1zM290,79h1v1h-1zM291,79h1v1h-1zM296,79h1v1h-1zM297,78h1v1h-1zM298,78h1v1h-1zM299,78h1v1h-1zM304,78h1v1h-1zM305,78h1v1h-1zM306,78h1v1h-1zM307,78h1v1h-1zM312,77h1v1h-1zM313,77h1v1h-1zM314,77h1v1h-1zM315,77h1v1h-1zM320,77h1v1h-1zM321,77h1v1h-1zM322,77h1v1h-1zM323,77h1v1h-1zM328,76h1v1h-1zM329,76h1v1h-1zM330,76h1v1h-1zM331,76h1v1h-1zM336,76h1v1h-1zM337,76h1v1h-1zM338,76h1v1h-1zM339,75h1v1h-1zM344,75h1v1h-1zM345,75h1v1h-1zM346,75h1v1h-1zM347,75h1v1h-1zM352,74h1v1h-1zM353,74h1v1h-1zM354,74h1v1h-1zM355,74h1v1h-1zM360,74h1v1h-1zM361,74h1v1h-1zM362,74h1v1h-1zM363,74h1v1h-1zM368,73h1v1h-1zM369,73h1v1h-1zM370,73h1v1h-1zM371,73h1v1h-1zM376,73h1v1h-1zM377,73h1v1h-1zM378,73h1v1h-1zM379,73h1v1h-1zM384,72h1v1h-1zM385,72h1v1h-1zM386,72h1v1h-1zM387,72h1v1h-1zM392,72h1v1h-1zM393,72h1v1h-1zM394,71h1v1h-1zM395,71h1v1h-1zM400,71h1v1h-1zM401,71h1v1h-1zM402,71h1v1h-1zM403,71h1v1h-1zM408,70h1v1h-1zM409,70h1v1h-1zM410,70h1v1h-1zM411,70h1v1h-1zM416,70h1v1h-1zM417,70h1v1h-1zM418,70h1v1h-1zM419,70h1v1h-1zM424,69h1v1h-1zM425,69h1v1h-1zM426,69h1v1h-1zM427,69h1v1h-1zM432,69h1v1h-1zM433,69h1v1h-1zM434,69h1v1h-1zM435,68h1v1h-1zM440,68h1v1h-1zM441,68h1v1h-1zM442,68h1v1h-1zM443,68h1v1h-1zM448,68h1v1h-1zM449,67h1v1h-1zM450,67h1v1h-1zM451,67h1v1h-1zM456,67h1v1h-1zM457,67h1v1h-1zM458,67h1v1h-1zM459,67h1v1h-1zM464,66h1v1h-1zM465,66h1v1h-1zM466,66h1v1h-1zM467,66h1v1h-1zM472,66h1v1h-1zM473,66h1v1h-1zM474,66h1v1h-1zM475,66h1v1h-1zM480,65h1v1h-1zM481,65h1v1h-1zM482,65h1v1h-1zM483,65h1v1h-1zM488,65h1v1h-1zM489,65h1v1h-1zM490,64h1v1h-1zM491,64h1v1h-1zM496,64h1v1h-1zM497,64h1v1h-1zM498,64h1v1h-1zM499,64h1v1h-1zM504,63h1v1h-1zM505,63h1v1h-1zM506,63h1v1h-1zM507,63h1v1h-1zM512,63h1v1h-1zM513,63h1v1h-1zM514,63h1v1h-1zM515,63h1v1h-1zM520,62h1v1h-1zM521,62h1v1h-1zM522,62h1v1h-1zM523,62h1v1h-1zM528,62h1v1h-1zM529,62h1v1h-1zM530,62h1v1h-1zM531,61h1v1h-1zM536,61h1v1h-1zM537,61h1v1h-1zM538,61h1v1h-1zM539,61h1v1h-1zM544,61h1v1h-1zM545,60h1v1h-1zM546,60h1v1h-1zM547,60h1v1h-1zM552,60h1v1h-1zM553,60h1v1h-1zM554,60h1v1h-1zM555,60h1v1h-1zM560,59h1v1h-1zM561,59h1v1h-1zM562,59h1v1h-1zM563,59h1v1h-1zM568,59h1v1h-1zM569,59h1v1h-1zM570,59h1v1h-1zM571,59h1v1h-1zM576,58h1v1h-1zM577,58h1v1h-1zM578,58h1v1h-1zM579,58h1v1h-1zM584,58h1v1h-1zM585,58h1v1h-1zM586,57h1v1h-1zM587,57h1v1h-1zM592,57h1v1h-1zM593,57h1v1h-1zM594,57h1v1h-1zM595,57h1v1h-1zM600,56h1v1h-1zM601,56h1v1h-1zM602,56h1v1h-1zM603,56h1v1h-1zM608,56h1v1h-1zM609,56h1v1h-1zM610,56h1v1h-1zM611,56h1v1h-1zM616,55h1v1h-1zM617,55h1v1h-1zM618,55h1v1h-1zM619,55h1v1h-1zM624,55h1v1h-1zM625,55h1v1h-1zM626,55h1v1h-1zM627,55h1v1h-1zM632,54h1v1h-1zM633,54h1v1h-1zM634,54h1v1h-1zM635,54h1v1h-1zM640,54h1v1h-1zM641,54h1v1h-1zM642,53h1v1h-1zM643,53h1v1h-1zM648,53h1v1h-1zM649,53h1v1h-1zM650,53h1v1h-1zM651,53h1v1h-1zM656,52h1v1h-1zM657,52h1v1h-1zM658,52h1v1h-1zM659,52h1v1h-1zM664,52h1v1h-1zM665,52h1v1h-1zM666,52h1v1h-1zM667,52h1v1h-1zM672,51h1v1h-1zM673,51h1v1h-1zM674,51h1v1h-1z" fill="#00ff00"/><path d="M4,100h1v1h-1zM5,100h1v1h-1zM6,100h1v1h-1zM7,100h1v1h-1zM12,99h1v1h-1zM13,99h1v1h-1zM14,99h1v1h-1zM15,99h1v1h-1zM20,99h1v1h-1zM21,99h1v1h-1zM22,98h1v1h-1zM23,98h1v1h-1zM28,98h1v1h-1zM29,98h1v1h-1zM30,98h1v1h-1zM31,98h1v1h-1zM36,97h1v1h-1zM37,97h1v1h-1zM38,97h1v1h-1zM39,97h1v1h-1zM44,97h1v1h-1zM45,97h1v1h-1zM46,97h1v1h-1zM47,97h1v1h-1zM52,96h1v1h-1zM53,96h1v1h-1zM54,96h1v1h-1zM55,96h1v1h-1zM60,96h1v1h-1zM61,96h1v1h-1zM62,96h1v1h-1zM63,95h1v1h-1zM68,95h1v1h-1zM69,95h1v1h-1zM70,95h1v1h-1zM71,95h1v1h-1zM76,95h1v1h-1zM77,94h1v1h-1zM78,94h1v1h-1zM79,94h1v1h-1zM84,94h1v1h-1zM85,94h1v1h-1zM86,94h1v1h-1zM87,94h1v1h-1zM92,93h1v1h-1zM93,93h1v1h-1zM94,93h1v1h-1zM95,93h1v1h-1zM100,93h1v1h-1zM101,93h1v1h-1zM102,93h1v1h-1zM103,93h1v1h-1zM108,92h1v1h-1zM109,92h1v1h-1zM110,92h1v1h-1zM111,92h1v1h-1zM116,92h1v1h-1zM117,92h1v1h-1zM118,91h1v1h-1zM119,91h1v1h-1zM124,91h1v1h-1zM125,91h1v1h-1zM126,91h1v1h-1zM127,91h1v1h-1zM132,90h1v1h-1zM133,90h1v1h-1zM134,90h1v1h-1zM135,90h1v1h-1zM140,90h1v1h-1zM141,90h1v1h-1zM142,90h1v1h-1zM143,90h1v1h-1zM148,89h1v1h-1zM149,89h1v1h-1zM150,89h1v1h-1zM151,89h1v1h-1zM156,89h1v1h-1zM157,89h1v1h-1zM158,89h1v1h-1zM159,88h1v1h-1zM164,88h1v1h-1zM165,88h1v1h-1zM166,88h1v1h-1zM167,88h1v1h-1zM172,88h1v1h-1zM173,87h1v1h-1zM174,87h1v1h-1zM175,87h1v1h-1zM180,87h1v1h-1zM181,87h1v1h-1zM182,87h1v1h-1zM183,87h1v1h-1zM188,86h1v1h-1zM189,86h1v1h-1zM190,86h1v1h-1zM191,86h1v1h-1zM196,86h1v1h-1zM197,86h1v1h-1zM198,86h1v1h-1zM199,86h1v1h-1zM204,85h1v1h-1zM205,85h1v1h-1zM206,85h1v1h-1zM207,85h1v1h-1zM212,85h1v1h-1zM213,85h1v1h-1zM214,85h1v1h-1zM215,84h1v1h-1zM220,84h1v1h-1zM221,84h1v1h-1zM222,84h1v1h-1zM223,84h1v1h-1zM228,83h1v1h-1zM229,83h1v1h-1zM230,83h1v1h-1zM231,83h1v1h-1zM236,83h1v1h-1zM237,83h1v1h-1zM238,83h1v1h-1zM239,83h1v1h-1zM244,82h1v1h-1zM245,82h1v1h-1zM246,82h1v1h-1zM247,82h1v1h-1zM252,82h1v1h-1zM253,82h1v1h-1zM254,82h1v1h-1zM255,82h1v1h-1zM260,81h1v1h-1zM261,81h1v1h-1zM262,81h1v1h-1zM263,81h1v1h-1zM268,81h1v1h-1zM269,81h1v1h-1zM270,80h1v1h-1zM271,80h1v1h-1zM276,80h1v1h-1zM277,80h1v1h-1zM278,80h1v1h-1zM279,80h1v1h-1zM284,79h1v1h-1zM285,79h1v1h-1zM286,79h1v1h-1zM287,79h1v1h-1zM292,79h1v1h-1zM293,79h1v1h-1zM294,79h1v1h-1zM295,79h1v1h-1zM300,78h1v1h-1zM301,78h1v1h-1zM302,78h1v1h-1zM303,78h1v1h-1zM308,78h1v1h-1zM309,78h1v1h-1zM310,78h1v1h-1zM311,77h1v1h-1zM316,77h1v1h-1zM317,77h1v1h-1zM318,77h1v1h-1zM319,77h1v1h-1zM324,77h1v1h-1zM325,76h1v1h-1zM326,76h1v1h-1zM327,76h1v1h-1zM332,76h1v1h-1zM333,76h1v1h-1zM334,76h1v1h-1zM335,76h1v1h-1zM340,75h1v1h-1zM341,75h1v1h-1zM342,75h1v1h-1zM343,75h1v1h-1zM348,75h1v1h-1zM349,75h1v1h-1zM350,75h1v1h-1zM351,75h1v1h-1zM356,74h1v1h-1zM357,74h1v1h-1zM358,74h1v1h-1zM359,74h1v1h-1zM364,74h1v1h-1zM365,74h1v1h-1zM366,73h1v1h-1zM367,73h1v1h-1zM372,73h1v1h-1zM373,73h1v1h-1zM374,73h1v1h-1zM375,73h1v1h-1zM380,72h1v1h-1zM381,72h1v1h-1zM382,72h1v1h-1zM383,72h1v1h-1zM388,72h1v1h-1zM389,72h1v1h-1zM390,72h1v1h-1zM391,72h1v1h-1zM396,71h1v1h-1zM397,71h1v1h-1zM398,71h1v1h-1zM399,71h1v1h-1zM404,71h1v1h-1zM405,71h1v1h-1zM406,71h1v1h-1zM407,70h1v1h-1zM412,70h1v1h-1zM413,70h1v1h-1zM414,70h1v1h-1zM415,70h1v1h-1zM420,70h1v1h-1zM421,69h1v1h-1zM422,69h1v1h-1zM423,69h1v1h-1zM428,69h1v1h-1zM429,69h1v1h-1zM430,69h1v1h-1zM431,69h1v1h-1zM436,68h1v1h-1zM437,68h1v1h-1zM438,68h1v1h-1zM439,68h1v1h-1zM444,68h1v1h-1zM445,68h1v1h-1zM446,68h1v1h-1zM447,68h1v1h-1zM452,67h1v1h-1zM453,67h1v1h-1zM454,67h1v1h-1zM455,67h1v1h-1zM460,67h1v1h-1zM461,67h1v1h-1zM462,66h1v1h-1zM463,66h1v1h-1zM468,66h1v1h-1zM469,66h1v1h-1zM470,66h1v1h-1zM471,66h1v1h-1zM476,65h1v1h-1zM477,65h1v1h-1zM478,65h1v1h-1zM479,65h1v1h-1zM484,65h1v1h-1zM485,65h1v1h-1zM486,65h1v1h-1zM487,65h1v1h-1zM492,64h1v1h-1zM493,64h1v1h-1zM494,64h1v1h-1zM495,64h1v1h-1zM500,64h1v1h-1zM501,64h1v1h-1zM502,64h1v1h-1zM503,64h1v1h-1zM508,63h1v1h-1zM509,63h1v1h-1zM510,63h1v1h-1zM511,63h1v1h-1zM516,63h1v1h-1zM517,63h1v1h-1zM518,62h1v1h-1zM519,62h1v1h-1zM524,62h1v1h-1zM525,62h1v1h-1zM526,62h1v1h-1zM527,62h1v1h-1zM532,61h1v1h-1zM533,61h1v1h-1zM534,61h1v1h-1zM535,61h1v1h-1zM540,61h1v1h-1zM541,61h1v1h-1zM542,61h1v1h-1zM543,61h1v1h-1zM548,60h1v1h-1zM549,60h1v1h-1zM550,60h1v1h-1zM551,60h1v1h-1zM556,60h1v1h-1zM557,60h1v1h-1zM558,60h1v1h-1zM559,59h1v1h-1zM564,59h1v1h-1zM565,59h1v1h-1zM566,59h1v1h-1zM567,59h1v1h-1zM572,59h1v1h-1zM573,58h1v1h-1zM574,58h1v1h-1zM575,58h1v1h-1zM580,58h1v1h-1zM581,58h1v1h-1zM582,58h1v1h-1zM583,58h1v1h-1zM588,57h1v1h-1zM589,57h1v1h-1zM590,57h1v1h-1zM591,57h1v1h-1zM596,57h1v1h-1zM597,57h1v1h-1zM598,57h1v1h-1zM599,57h1v1h-1zM604,56h1v1h-1zM605,56h1v1h-1zM606,56h1v1h-1zM607,56h1v1h-1zM612,56h1v1h-1zM613,56h1v1h-1zM614,55h1v1h-1zM615,55h1v1h-1zM620,55h1v1h-1zM621,55h1v1h-1zM622,55h1v1h-1zM623,55h1v1h-1zM628,54h1v1h-1zM629,54h1v1h-1zM630,54h1v1h-1zM631,54h1v1h-1zM636,54h1v1h-1zM637,54h1v1h-1zM638,54h1v1h-1zM639,54h1v1h-1zM644,53h1v1h-1zM645,53h1v1h-1zM646,53h1v1h-1zM647,53h1v1h-1zM652,53h1v1h-1zM653,53h1v1h-1zM654,53h1v1h-1zM655,52h1v1h-1zM660,52h1v1h-1zM661,52h1v1h-1zM662,52h1v1h-1zM663,52h1v1h-1zM668,52h1v1h-1zM669,51h1v1h-1zM670,51h1v1h-1zM671,51h1v1h-1z" fill="#000"/>
<rect x="0" y="99" width="1" height="21" fill="#800080"/>
<rect x="674" y="51" width="1" height="32" fill="#800080"/>
</svg>
<div style="left:687px;top:141px;width:1px;height:32px;background:#800080"></div>
<div style="left:687px;top:93px;width:1px;height:4px;background:#0000ff"></div><div style="left:687px;top:101px;width:1px;height:4px;background:#0000ff"></div><div style="left:687px;top:109px;width:1px;height:4px;background:#0000ff"></div><div style="left:687px;top:117px;width:1px;height:4px;background:#0000ff"></div><div style="left:687px;top:125px;width:1px;height:4px;background:#0000ff"></div><div style="left:687px;top:133px;width:1px;height:4px;background:#0000ff"></div><div style="left:687px;top:141px;width:1px;height:4px;background:#0000ff"></div><div style="left:687px;top:149px;width:1px;height:4px;background:#0000ff"></div><div style="left:687px;top:157px;width:1px;height:4px;background:#0000ff"></div><div style="left:687px;top:165px;width:1px;height:4px;background:#0000ff"></div><div style="left:687px;top:173px;width:1px;height:4px;background:#0000ff"></div><div style="left:687px;top:181px;width:1px;height:4px;background:#0000ff"></div><div style="left:687px;top:189px;width:1px;height:4px;background:#0000ff"></div><div style="left:687px;top:197px;width:1px;height:4px;background:#0000ff"></div><div style="left:687px;top:205px;width:1px;height:4px;background:#0000ff"></div><div style="left:687px;top:213px;width:1px;height:4px;background:#0000ff"></div><div style="left:687px;top:221px;width:1px;height:4px;background:#0000ff"></div><div style="left:687px;top:229px;width:1px;height:4px;background:#0000ff"></div>
<div style="left:11px;top:189px;width:1px;height:21px;background:#800080"></div>
<div style="left:7px;top:246px;width:339px;height:1px;background:#808080;"></div>
<div style="left:7px;top:246px;width:1px;height:189px;background:#808080;"></div>
<div style="left:346px;top:246px;width:1px;height:190px;background:#ffffff;"></div>
<div style="left:7px;top:435px;width:340px;height:1px;background:#ffffff;"></div>
<div style="left:8px;top:247px;width:337px;height:1px;background:#ffffff;"></div>
<div style="left:8px;top:247px;width:1px;height:187px;background:#ffffff;"></div>
<div style="left:345px;top:247px;width:1px;height:188px;background:#808080;"></div>
<div style="left:8px;top:434px;width:338px;height:1px;background:#808080;"></div>
<div style="left:14px;top:240px;width:64px;height:10px;background:#d4d0c8;"></div>
<div class="t" style="left:14px;top:241px;color:#000;">Transmissor</div>
<div style="left:352px;top:246px;width:339px;height:1px;background:#808080;"></div>
<div style="left:352px;top:246px;width:1px;height:189px;background:#808080;"></div>
<div style="left:691px;top:246px;width:1px;height:190px;background:#ffffff;"></div>
<div style="left:352px;top:435px;width:340px;height:1px;background:#ffffff;"></div>
<div style="left:353px;top:247px;width:337px;height:1px;background:#ffffff;"></div>
<div style="left:353px;top:247px;width:1px;height:187px;background:#ffffff;"></div>
<div style="left:690px;top:247px;width:1px;height:188px;background:#808080;"></div>
<div style="left:353px;top:434px;width:338px;height:1px;background:#808080;"></div>
<div style="left:359px;top:240px;width:48px;height:10px;background:#d4d0c8;"></div>
<div class="t" style="left:359px;top:241px;color:#000;">Receptor</div>
<div style="left:7px;top:446px;width:339px;height:1px;background:#808080;"></div>
<div style="left:7px;top:446px;width:1px;height:50px;background:#808080;"></div>
<div style="left:346px;top:446px;width:1px;height:51px;background:#ffffff;"></div>
<div style="left:7px;top:496px;width:340px;height:1px;background:#ffffff;"></div>
<div style="left:8px;top:447px;width:337px;height:1px;background:#ffffff;"></div>
<div style="left:8px;top:447px;width:1px;height:48px;background:#ffffff;"></div>
<div style="left:345px;top:447px;width:1px;height:49px;background:#808080;"></div>
<div style="left:8px;top:495px;width:338px;height:1px;background:#808080;"></div>
<div style="left:14px;top:440px;width:27px;height:10px;background:#d4d0c8;"></div>
<div class="t" style="left:14px;top:441px;color:#000;">Rede</div>
<div style="left:352px;top:446px;width:339px;height:1px;background:#808080;"></div>
<div style="left:352px;top:446px;width:1px;height:50px;background:#808080;"></div>
<div style="left:691px;top:446px;width:1px;height:51px;background:#ffffff;"></div>
<div style="left:352px;top:496px;width:340px;height:1px;background:#ffffff;"></div>
<div style="left:353px;top:447px;width:337px;height:1px;background:#ffffff;"></div>
<div style="left:353px;top:447px;width:1px;height:48px;background:#ffffff;"></div>
<div style="left:690px;top:447px;width:1px;height:49px;background:#808080;"></div>
<div style="left:353px;top:495px;width:338px;height:1px;background:#808080;"></div>
<div style="left:359px;top:440px;width:89px;height:10px;background:#d4d0c8;"></div>
<div class="t" style="left:359px;top:441px;color:#000;">Freqüência (MHz)</div>
<div style="left:15px;top:261px;width:277px;height:10px;background:#d4d0c8;"></div>
<div style="left:15px;top:261px;width:276px;height:1px;background:#808080;"></div>
<div style="left:15px;top:261px;width:1px;height:9px;background:#808080;"></div>
<div style="left:291px;top:261px;width:1px;height:10px;background:#ffffff;"></div>
<div style="left:15px;top:270px;width:277px;height:1px;background:#ffffff;"></div>
<div style="left:16px;top:262px;width:274px;height:1px;background:#404040;"></div>
<div style="left:16px;top:262px;width:1px;height:7px;background:#404040;"></div>
<div style="left:290px;top:262px;width:1px;height:8px;background:#d4d0c8;"></div>
<div style="left:16px;top:269px;width:275px;height:1px;background:#d4d0c8;"></div>
<div style="left:20px;top:264px;width:18px;height:4px;background:#00ff00;"></div>
<div style="left:42px;top:264px;width:18px;height:4px;background:#00ff00;"></div>
<div style="left:65px;top:264px;width:18px;height:4px;background:#00ff00;"></div>
<div style="left:87px;top:264px;width:18px;height:4px;background:#00ff00;"></div>
<div style="left:110px;top:264px;width:18px;height:4px;background:#00ff00;"></div>
<div style="left:132px;top:264px;width:18px;height:4px;background:#00ff00;"></div>
<div style="left:154px;top:264px;width:18px;height:4px;background:#008000;"></div>
<div style="left:177px;top:264px;width:18px;height:4px;background:#008000;"></div>
<div style="left:199px;top:264px;width:18px;height:4px;background:#008000;"></div>
<div style="left:222px;top:264px;width:18px;height:4px;background:#800000;"></div>
<div style="left:244px;top:264px;width:18px;height:4px;background:#800000;"></div>
<div style="left:266px;top:264px;width:18px;height:4px;background:#800000;"></div>
<div class="t" style="left:302px;top:260px;color:#000;">S6</div>
<div style="left:360px;top:261px;width:277px;height:10px;background:#d4d0c8;"></div>
<div style="left:360px;top:261px;width:276px;height:1px;background:#808080;"></div>
<div style="left:360px;top:261px;width:1px;height:9px;background:#808080;"></div>
<div style="left:636px;top:261px;width:1px;height:10px;background:#ffffff;"></div>
<div style="left:360px;top:270px;width:277px;height:1px;background:#ffffff;"></div>
<div style="left:361px;top:262px;width:274px;height:1px;background:#404040;"></div>
<div style="left:361px;top:262px;width:1px;height:7px;background:#404040;"></div>
<div style="left:635px;top:262px;width:1px;height:8px;background:#d4d0c8;"></div>
<div style="left:361px;top:269px;width:275px;height:1px;background:#d4d0c8;"></div>
<div style="left:365px;top:264px;width:18px;height:4px;background:#00ff00;"></div>
<div style="left:387px;top:264px;width:18px;height:4px;background:#00ff00;"></div>
<div style="left:410px;top:264px;width:18px;height:4px;background:#00ff00;"></div>
<div style="left:432px;top:264px;width:18px;height:4px;background:#00ff00;"></div>
<div style="left:455px;top:264px;width:18px;height:4px;background:#00ff00;"></div>
<div style="left:477px;top:264px;width:18px;height:4px;background:#00ff00;"></div>
<div style="left:499px;top:264px;width:18px;height:4px;background:#008000;"></div>
<div style="left:522px;top:264px;width:18px;height:4px;background:#008000;"></div>
<div style="left:544px;top:264px;width:18px;height:4px;background:#008000;"></div>
<div style="left:567px;top:264px;width:18px;height:4px;background:#800000;"></div>
<div style="left:589px;top:264px;width:18px;height:4px;background:#800000;"></div>
<div style="left:611px;top:264px;width:18px;height:4px;background:#800000;"></div>
<div class="t" style="left:647px;top:260px;color:#000;">S6</div>
<div style="left:15px;top:277px;width:325px;height:22px;background:#fff;"></div>
<div style="left:15px;top:277px;width:324px;height:1px;background:#808080;"></div>
<div style="left:15px;top:277px;width:1px;height:21px;background:#808080;"></div>
<div style="left:339px;top:277px;width:1px;height:22px;background:#ffffff;"></div>
<div style="left:15px;top:298px;width:325px;height:1px;background:#ffffff;"></div>
<div style="left:16px;top:278px;width:322px;height:1px;background:#404040;"></div>
<div style="left:16px;top:278px;width:1px;height:19px;background:#404040;"></div>
<div style="left:338px;top:278px;width:1px;height:20px;background:#d4d0c8;"></div>
<div style="left:16px;top:297px;width:323px;height:1px;background:#d4d0c8;"></div>
<div style="left:322px;top:279px;width:16px;height:18px;background:#d4d0c8;"></div>
<div style="left:322px;top:279px;width:15px;height:1px;background:#d4d0c8;"></div>
<div style="left:322px;top:279px;width:1px;height:17px;background:#d4d0c8;"></div>
<div style="left:337px;top:279px;width:1px;height:18px;background:#404040;"></div>
<div style="left:322px;top:296px;width:16px;height:1px;background:#404040;"></div>
<div style="left:323px;top:280px;width:13px;height:1px;background:#ffffff;"></div>
<div style="left:323px;top:280px;width:1px;height:15px;background:#ffffff;"></div>
<div style="left:336px;top:280px;width:1px;height:16px;background:#808080;"></div>
<div style="left:323px;top:295px;width:14px;height:1px;background:#808080;"></div>
<svg style="left:326px;top:286px" width="7" height="4"><path d="M0 0h7v1h-1v1h-1v1h-1v1h-1v-1h-1v-1h-1v-1h-1z" fill="#000"/></svg>
<div class="t" style="left:18px;top:282px;color:#000;">Nedes</div>
<div style="left:360px;top:277px;width:325px;height:22px;background:#fff;"></div>
<div style="left:360px;top:277px;width:324px;height:1px;background:#808080;"></div>
<div style="left:360px;top:277px;width:1px;height:21px;background:#808080;"></div>
<div style="left:684px;top:277px;width:1px;height:22px;background:#ffffff;"></div>
<div style="left:360px;top:298px;width:325px;height:1px;background:#ffffff;"></div>
<div style="left:361px;top:278px;width:322px;height:1px;background:#404040;"></div>
<div style="left:361px;top:278px;width:1px;height:19px;background:#404040;"></div>
<div style="left:683px;top:278px;width:1px;height:20px;background:#d4d0c8;"></div>
<div style="left:361px;top:297px;width:323px;height:1px;background:#d4d0c8;"></div>
<div style="left:667px;top:279px;width:16px;height:18px;background:#d4d0c8;"></div>
<div style="left:667px;top:279px;width:15px;height:1px;background:#d4d0c8;"></div>
<div style="left:667px;top:279px;width:1px;height:17px;background:#d4d0c8;"></div>
<div style="left:682px;top:279px;width:1px;height:18px;background:#404040;"></div>
<div style="left:667px;top:296px;width:16px;height:1px;background:#404040;"></div>
<div style="left:668px;top:280px;width:13px;height:1px;background:#ffffff;"></div>
<div style="left:668px;top:280px;width:1px;height:15px;background:#ffffff;"></div>
<div style="left:681px;top:280px;width:1px;height:16px;background:#808080;"></div>
<div style="left:668px;top:295px;width:14px;height:1px;background:#808080;"></div>
<svg style="left:671px;top:286px" width="7" height="4"><path d="M0 0h7v1h-1v1h-1v1h-1v1h-1v-1h-1v-1h-1v-1h-1z" fill="#000"/></svg>
<div class="t" style="left:363px;top:282px;color:#000;">Nego Mala Porteira</div>
<div class="t" style="left:14px;top:302px;color:#000;">Função</div>
<div class="t" style="left:154px;top:302px;color:#0000cc;">Escravo</div>
<div class="t" style="left:14px;top:321px;color:#000;">Nome do sistema Tx</div>
<div style="left:155px;top:317px;width:185px;height:22px;background:#fff;"></div>
<div style="left:155px;top:317px;width:184px;height:1px;background:#808080;"></div>
<div style="left:155px;top:317px;width:1px;height:21px;background:#808080;"></div>
<div style="left:339px;top:317px;width:1px;height:22px;background:#ffffff;"></div>
<div style="left:155px;top:338px;width:185px;height:1px;background:#ffffff;"></div>
<div style="left:156px;top:318px;width:182px;height:1px;background:#404040;"></div>
<div style="left:156px;top:318px;width:1px;height:19px;background:#404040;"></div>
<div style="left:338px;top:318px;width:1px;height:20px;background:#d4d0c8;"></div>
<div style="left:156px;top:337px;width:183px;height:1px;background:#d4d0c8;"></div>
<div style="left:322px;top:319px;width:16px;height:18px;background:#d4d0c8;"></div>
<div style="left:322px;top:319px;width:15px;height:1px;background:#d4d0c8;"></div>
<div style="left:322px;top:319px;width:1px;height:17px;background:#d4d0c8;"></div>
<div style="left:337px;top:319px;width:1px;height:18px;background:#404040;"></div>
<div style="left:322px;top:336px;width:16px;height:1px;background:#404040;"></div>
<div style="left:323px;top:320px;width:13px;height:1px;background:#ffffff;"></div>
<div style="left:323px;top:320px;width:1px;height:15px;background:#ffffff;"></div>
<div style="left:336px;top:320px;width:1px;height:16px;background:#808080;"></div>
<div style="left:323px;top:335px;width:14px;height:1px;background:#808080;"></div>
<svg style="left:326px;top:326px" width="7" height="4"><path d="M0 0h7v1h-1v1h-1v1h-1v1h-1v-1h-1v-1h-1v-1h-1z" fill="#000"/></svg>
<div class="t" style="left:158px;top:322px;color:#000;">Sistema   1</div>
<div class="t" style="left:14px;top:340px;color:#000;">Potência Tx</div>
<div class="t" style="left:154px;top:340px;color:#0000cc;">0,1 W</div>
<div class="t" style="left:254px;top:340px;color:#0000cc;">20 dBm</div>
<div class="t" style="left:14px;top:356px;color:#000;">Perda de linha</div>
<div class="t" style="left:154px;top:356px;color:#0000cc;">0,5 dB</div>
<div class="t" style="left:14px;top:372px;color:#000;">Ganho de antena</div>
<div class="t" style="left:154px;top:372px;color:#0000cc;">23 dBi</div>
<div class="t" style="left:254px;top:372px;color:#0000cc;">20,9 dBd</div>
<div style="left:319px;top:367px;width:19px;height:19px;background:#d4d0c8;"></div>
<div style="left:319px;top:367px;width:18px;height:1px;background:#ffffff;"></div>
<div style="left:319px;top:367px;width:1px;height:18px;background:#ffffff;"></div>
<div style="left:337px;top:367px;width:1px;height:19px;background:#404040;"></div>
<div style="left:319px;top:385px;width:19px;height:1px;background:#404040;"></div>
<div style="left:320px;top:368px;width:16px;height:1px;background:#d4d0c8;"></div>
<div style="left:320px;top:368px;width:1px;height:16px;background:#d4d0c8;"></div>
<div style="left:336px;top:368px;width:1px;height:17px;background:#808080;"></div>
<div style="left:320px;top:384px;width:17px;height:1px;background:#808080;"></div>
<div style="left:325px;top:376px;width:5px;height:1px;background:#000;"></div>
<div style="left:327px;top:374px;width:1px;height:5px;background:#000;"></div>
<div class="t" style="left:14px;top:388px;color:#000;">Potência irradiada</div>
<div class="t" style="left:154px;top:388px;color:#0000cc;">EIRP=17,78 W</div>
<div class="t" style="left:254px;top:388px;color:#0000cc;">ERP=10,84 W</div>
<div class="t" style="left:14px;top:412px;color:#000;">Altura da antena (m)</div>
<div style="left:154px;top:407px;width:53px;height:19px;background:#fff;"></div>
<div style="left:154px;top:407px;width:52px;height:1px;background:#808080;"></div>
<div style="left:154px;top:407px;width:1px;height:18px;background:#808080;"></div>
<div style="left:206px;top:407px;width:1px;height:19px;background:#ffffff;"></div>
<div style="left:154px;top:425px;width:53px;height:1px;background:#ffffff;"></div>
<div style="left:155px;top:408px;width:50px;height:1px;background:#404040;"></div>
<div style="left:155px;top:408px;width:1px;height:16px;background:#404040;"></div>
<div style="left:205px;top:408px;width:1px;height:17px;background:#d4d0c8;"></div>
<div style="left:155px;top:424px;width:51px;height:1px;background:#d4d0c8;"></div>
<div class="t" style="left:157px;top:410px;color:#000;">45</div>
<div style="left:214px;top:407px;width:19px;height:19px;background:#d4d0c8;"></div>
<div style="left:214px;top:407px;width:18px;height:1px;background:#ffffff;"></div>
<div style="left:214px;top:407px;width:1px;height:18px;background:#ffffff;"></div>
<div style="left:232px;top:407px;width:1px;height:19px;background:#404040;"></div>
<div style="left:214px;top:425px;width:19px;height:1px;background:#404040;"></div>
<div style="left:215px;top:408px;width:16px;height:1px;background:#d4d0c8;"></div>
<div style="left:215px;top:408px;width:1px;height:16px;background:#d4d0c8;"></div>
<div style="left:231px;top:408px;width:1px;height:17px;background:#808080;"></div>
<div style="left:215px;top:424px;width:17px;height:1px;background:#808080;"></div>
<div style="left:221px;top:417px;width:3px;height:1px;background:#000;"></div>
<div style="left:239px;top:407px;width:19px;height:19px;background:#d4d0c8;"></div>
<div style="left:239px;top:407px;width:18px;height:1px;background:#ffffff;"></div>
<div style="left:239px;top:407px;width:1px;height:18px;background:#ffffff;"></div>
<div style="left:257px;top:407px;width:1px;height:19px;background:#404040;"></div>
<div style="left:239px;top:425px;width:19px;height:1px;background:#404040;"></div>
<div style="left:240px;top:408px;width:16px;height:1px;background:#d4d0c8;"></div>
<div style="left:240px;top:408px;width:1px;height:16px;background:#d4d0c8;"></div>
<div style="left:256px;top:408px;width:1px;height:17px;background:#808080;"></div>
<div style="left:240px;top:424px;width:17px;height:1px;background:#808080;"></div>
<div style="left:245px;top:416px;width:5px;height:1px;background:#000;"></div>
<div style="left:247px;top:414px;width:1px;height:5px;background:#000;"></div>
<div style="left:266px;top:404px;width:73px;height:27px;background:#d4d0c8;"></div>
<div style="left:266px;top:404px;width:72px;height:1px;background:#ffffff;"></div>
<div style="left:266px;top:404px;width:1px;height:26px;background:#ffffff;"></div>
<div style="left:338px;top:404px;width:1px;height:27px;background:#404040;"></div>
<div style="left:266px;top:430px;width:73px;height:1px;background:#404040;"></div>
<div style="left:267px;top:405px;width:70px;height:1px;background:#d4d0c8;"></div>
<div style="left:267px;top:405px;width:1px;height:24px;background:#d4d0c8;"></div>
<div style="left:337px;top:405px;width:1px;height:25px;background:#808080;"></div>
<div style="left:267px;top:429px;width:71px;height:1px;background:#808080;"></div>
<div class="t" style="left:279px;top:411px;color:#808080;text-shadow:1px 1px 0 #fff">Desfazer</div>
<div class="t" style="left:359px;top:302px;color:#000;">Função</div>
<div class="t" style="left:499px;top:302px;color:#0000cc;">Escravo</div>
<div class="t" style="left:359px;top:321px;color:#000;">Nome do sistema Rx</div>
<div style="left:500px;top:317px;width:185px;height:22px;background:#fff;"></div>
<div style="left:500px;top:317px;width:184px;height:1px;background:#808080;"></div>
<div style="left:500px;top:317px;width:1px;height:21px;background:#808080;"></div>
<div style="left:684px;top:317px;width:1px;height:22px;background:#ffffff;"></div>
<div style="left:500px;top:338px;width:185px;height:1px;background:#ffffff;"></div>
<div style="left:501px;top:318px;width:182px;height:1px;background:#404040;"></div>
<div style="left:501px;top:318px;width:1px;height:19px;background:#404040;"></div>
<div style="left:683px;top:318px;width:1px;height:20px;background:#d4d0c8;"></div>
<div style="left:501px;top:337px;width:183px;height:1px;background:#d4d0c8;"></div>
<div style="left:667px;top:319px;width:16px;height:18px;background:#d4d0c8;"></div>
<div style="left:667px;top:319px;width:15px;height:1px;background:#d4d0c8;"></div>
<div style="left:667px;top:319px;width:1px;height:17px;background:#d4d0c8;"></div>
<div style="left:682px;top:319px;width:1px;height:18px;background:#404040;"></div>
<div style="left:667px;top:336px;width:16px;height:1px;background:#404040;"></div>
<div style="left:668px;top:320px;width:13px;height:1px;background:#ffffff;"></div>
<div style="left:668px;top:320px;width:1px;height:15px;background:#ffffff;"></div>
<div style="left:681px;top:320px;width:1px;height:16px;background:#808080;"></div>
<div style="left:668px;top:335px;width:14px;height:1px;background:#808080;"></div>
<svg style="left:671px;top:326px" width="7" height="4"><path d="M0 0h7v1h-1v1h-1v1h-1v1h-1v-1h-1v-1h-1v-1h-1z" fill="#000"/></svg>
<div class="t" style="left:503px;top:322px;color:#000;">Sistema   1</div>
<div class="t" style="left:359px;top:340px;color:#000;">Campo E requerido</div>
<div class="t" style="left:499px;top:340px;color:#0000cc;">33,98 dBµV/m</div>
<div class="t" style="left:359px;top:356px;color:#000;">Ganho de antena</div>
<div class="t" style="left:499px;top:356px;color:#0000cc;">23 dBi</div>
<div class="t" style="left:599px;top:356px;color:#0000cc;">20,9 dBd</div>
<div style="left:664px;top:351px;width:19px;height:19px;background:#d4d0c8;"></div>
<div style="left:664px;top:351px;width:18px;height:1px;background:#ffffff;"></div>
<div style="left:664px;top:351px;width:1px;height:18px;background:#ffffff;"></div>
<div style="left:682px;top:351px;width:1px;height:19px;background:#404040;"></div>
<div style="left:664px;top:369px;width:19px;height:1px;background:#404040;"></div>
<div style="left:665px;top:352px;width:16px;height:1px;background:#d4d0c8;"></div>
<div style="left:665px;top:352px;width:1px;height:16px;background:#d4d0c8;"></div>
<div style="left:681px;top:352px;width:1px;height:17px;background:#808080;"></div>
<div style="left:665px;top:368px;width:17px;height:1px;background:#808080;"></div>
<div style="left:670px;top:360px;width:5px;height:1px;background:#000;"></div>
<div style="left:672px;top:358px;width:1px;height:5px;background:#000;"></div>
<div class="t" style="left:359px;top:372px;color:#000;">Perda de linha</div>
<div class="t" style="left:499px;top:372px;color:#0000cc;">0,5 dB</div>
<div class="t" style="left:359px;top:388px;color:#000;">Sensibilidade do Rx</div>
<div class="t" style="left:499px;top:388px;color:#0000cc;">3,5481µV</div>
<div class="t" style="left:599px;top:388px;color:#0000cc;">-96 dBm</div>
<div class="t" style="left:359px;top:412px;color:#000;">Altura da antena (m)</div>
<div style="left:499px;top:407px;width:53px;height:19px;background:#a2faa2;"></div>
<div style="left:499px;top:407px;width:52px;height:1px;background:#808080;"></div>
<div style="left:499px;top:407px;width:1px;height:18px;background:#808080;"></div>
<div style="left:551px;top:407px;width:1px;height:19px;background:#ffffff;"></div>
<div style="left:499px;top:425px;width:53px;height:1px;background:#ffffff;"></div>
<div style="left:500px;top:408px;width:50px;height:1px;background:#404040;"></div>
<div style="left:500px;top:408px;width:1px;height:16px;background:#404040;"></div>
<div style="left:550px;top:408px;width:1px;height:17px;background:#d4d0c8;"></div>
<div style="left:500px;top:424px;width:51px;height:1px;background:#d4d0c8;"></div>
<div class="t" style="left:502px;top:410px;color:#000;">66</div>
<div style="left:559px;top:407px;width:19px;height:19px;background:#d4d0c8;"></div>
<div style="left:559px;top:407px;width:18px;height:1px;background:#ffffff;"></div>
<div style="left:559px;top:407px;width:1px;height:18px;background:#ffffff;"></div>
<div style="left:577px;top:407px;width:1px;height:19px;background:#404040;"></div>
<div style="left:559px;top:425px;width:19px;height:1px;background:#404040;"></div>
<div style="left:560px;top:408px;width:16px;height:1px;background:#d4d0c8;"></div>
<div style="left:560px;top:408px;width:1px;height:16px;background:#d4d0c8;"></div>
<div style="left:576px;top:408px;width:1px;height:17px;background:#808080;"></div>
<div style="left:560px;top:424px;width:17px;height:1px;background:#808080;"></div>
<div style="left:566px;top:417px;width:3px;height:1px;background:#000;"></div>
<div style="left:584px;top:407px;width:19px;height:19px;background:#d4d0c8;"></div>
<div style="left:584px;top:407px;width:18px;height:1px;background:#ffffff;"></div>
<div style="left:584px;top:407px;width:1px;height:18px;background:#ffffff;"></div>
<div style="left:602px;top:407px;width:1px;height:19px;background:#404040;"></div>
<div style="left:584px;top:425px;width:19px;height:1px;background:#404040;"></div>
<div style="left:585px;top:408px;width:16px;height:1px;background:#d4d0c8;"></div>
<div style="left:585px;top:408px;width:1px;height:16px;background:#d4d0c8;"></div>
<div style="left:601px;top:408px;width:1px;height:17px;background:#808080;"></div>
<div style="left:585px;top:424px;width:17px;height:1px;background:#808080;"></div>
<div style="left:590px;top:416px;width:5px;height:1px;background:#000;"></div>
<div style="left:592px;top:414px;width:1px;height:5px;background:#000;"></div>
<div style="left:611px;top:404px;width:73px;height:27px;background:#d4d0c8;"></div>
<div style="left:611px;top:404px;width:72px;height:1px;background:#ffffff;"></div>
<div style="left:611px;top:404px;width:1px;height:26px;background:#ffffff;"></div>
<div style="left:683px;top:404px;width:1px;height:27px;background:#404040;"></div>
<div style="left:611px;top:430px;width:73px;height:1px;background:#404040;"></div>
<div style="left:612px;top:405px;width:70px;height:1px;background:#d4d0c8;"></div>
<div style="left:612px;top:405px;width:1px;height:24px;background:#d4d0c8;"></div>
<div style="left:682px;top:405px;width:1px;height:25px;background:#808080;"></div>
<div style="left:612px;top:429px;width:71px;height:1px;background:#808080;"></div>
<div class="t" style="left:624px;top:411px;color:#808080;text-shadow:1px 1px 0 #fff">Desfazer</div>
<div style="left:15px;top:465px;width:325px;height:22px;background:#fff;"></div>
<div style="left:15px;top:465px;width:324px;height:1px;background:#808080;"></div>
<div style="left:15px;top:465px;width:1px;height:21px;background:#808080;"></div>
<div style="left:339px;top:465px;width:1px;height:22px;background:#ffffff;"></div>
<div style="left:15px;top:486px;width:325px;height:1px;background:#ffffff;"></div>
<div style="left:16px;top:466px;width:322px;height:1px;background:#404040;"></div>
<div style="left:16px;top:466px;width:1px;height:19px;background:#404040;"></div>
<div style="left:338px;top:466px;width:1px;height:20px;background:#d4d0c8;"></div>
<div style="left:16px;top:485px;width:323px;height:1px;background:#d4d0c8;"></div>
<div style="left:322px;top:467px;width:16px;height:18px;background:#d4d0c8;"></div>
<div style="left:322px;top:467px;width:15px;height:1px;background:#d4d0c8;"></div>
<div style="left:322px;top:467px;width:1px;height:17px;background:#d4d0c8;"></div>
<div style="left:337px;top:467px;width:1px;height:18px;background:#404040;"></div>
<div style="left:322px;top:484px;width:16px;height:1px;background:#404040;"></div>
<div style="left:323px;top:468px;width:13px;height:1px;background:#ffffff;"></div>
<div style="left:323px;top:468px;width:1px;height:15px;background:#ffffff;"></div>
<div style="left:336px;top:468px;width:1px;height:16px;background:#808080;"></div>
<div style="left:323px;top:483px;width:14px;height:1px;background:#808080;"></div>
<svg style="left:326px;top:474px" width="7" height="4"><path d="M0 0h7v1h-1v1h-1v1h-1v1h-1v-1h-1v-1h-1v-1h-1z" fill="#000"/></svg>
<div class="t" style="left:18px;top:470px;color:#000;">GrupoImpactus</div>
<div class="t" style="left:391px;top:465px;color:#000;">Mínimo</div>
<div style="left:440px;top:464px;width:81px;height:19px;background:#fff;"></div>
<div style="left:440px;top:464px;width:80px;height:1px;background:#808080;"></div>
<div style="left:440px;top:464px;width:1px;height:18px;background:#808080;"></div>
<div style="left:520px;top:464px;width:1px;height:19px;background:#ffffff;"></div>
<div style="left:440px;top:482px;width:81px;height:1px;background:#ffffff;"></div>
<div style="left:441px;top:465px;width:78px;height:1px;background:#404040;"></div>
<div style="left:441px;top:465px;width:1px;height:16px;background:#404040;"></div>
<div style="left:519px;top:465px;width:1px;height:17px;background:#d4d0c8;"></div>
<div style="left:441px;top:481px;width:79px;height:1px;background:#d4d0c8;"></div>
<div class="t" style="left:443px;top:467px;color:#000;">5800</div>
<div class="t" style="left:546px;top:465px;color:#000;">Máximo</div>
<div style="left:603px;top:464px;width:81px;height:19px;background:#fff;"></div>
<div style="left:603px;top:464px;width:80px;height:1px;background:#808080;"></div>
<div style="left:603px;top:464px;width:1px;height:18px;background:#808080;"></div>
<div style="left:683px;top:464px;width:1px;height:19px;background:#ffffff;"></div>
<div style="left:603px;top:482px;width:81px;height:1px;background:#ffffff;"></div>
<div style="left:604px;top:465px;width:78px;height:1px;background:#404040;"></div>
<div style="left:604px;top:465px;width:1px;height:16px;background:#404040;"></div>
<div style="left:682px;top:465px;width:1px;height:17px;background:#d4d0c8;"></div>
<div style="left:604px;top:481px;width:79px;height:1px;background:#d4d0c8;"></div>
<div class="t" style="left:606px;top:467px;color:#000;">5800</div>
<svg style="left:494px;top:511px" width="11" height="9" shape-rendering="crispEdges"><path d="M1 1v9h1v-8h1v1h1v1h1v1h1v1h1v1h1v1h1v1h1v1h1v1h-1v-1h-1v-1h-1v-1h-1v-1h-1v-1h-1v-1h-1v-1h-1z" fill="#000"/><path d="M2 2v8h8v-1h-1v-1h-1v-1h-1v-1h-1v-1h-1v-1h-1v-1h-1v-1h-1z" fill="#fff"/><path d="M1 0h1v1h1v1h1v1h1v1h1v1h1v1h1v1h1v1h1v1h1v1h-1v-1h-1v-1h-1v-1h-1v-1h-1v-1h-1v-1h-1v-1h-1v-1h-1z" fill="#000"/><rect x="1" y="0" width="1" height="10" fill="#000"/></svg>
</body></html>
